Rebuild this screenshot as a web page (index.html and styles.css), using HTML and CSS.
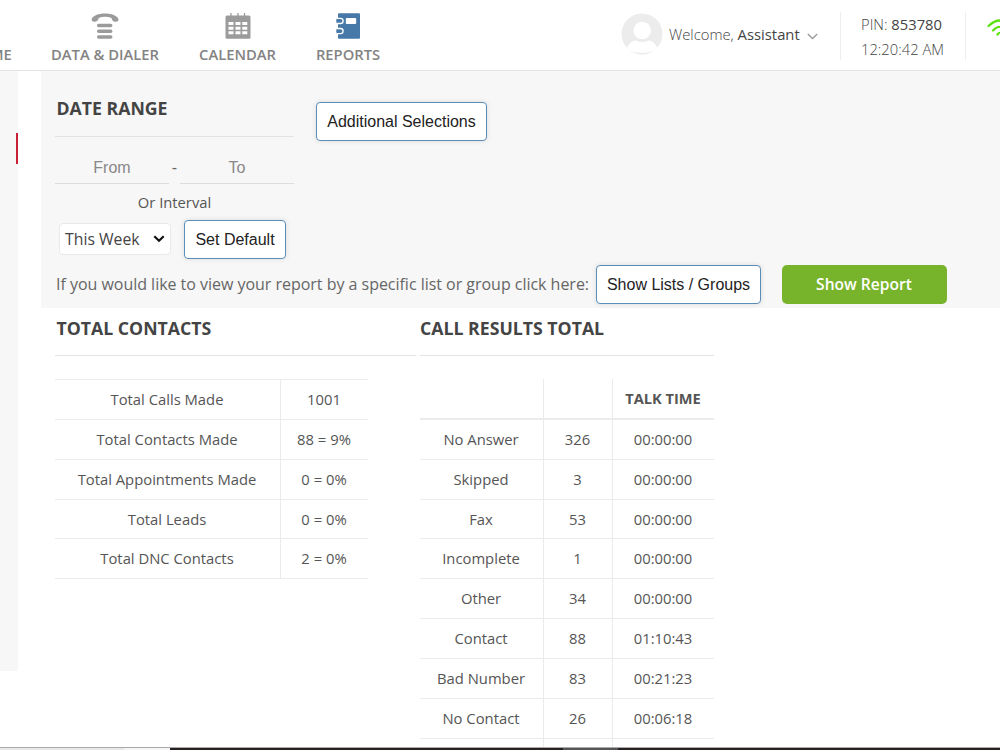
FILE: index.html
```html
<!DOCTYPE html>
<html lang="en">
<head>
<meta charset="utf-8">
<title>Reports</title>
<link rel="stylesheet" href="styles.css">
</head>
<body>
<div class="page">
  <header class="header">
    <nav class="nav">
      <a class="nav-item home">
        <svg width="28" height="28" viewBox="0 0 28 28"><path d="M2 15L14 4L27 14.500M6 15V26H22V15" fill="none" stroke="#9b9b9b" stroke-width="2.500"/></svg>
        <span>HOME</span>
      </a>
      <a class="nav-item dialer">
        <svg width="28" height="28" viewBox="0 0 28 28"><path d="M.7 7.500C1 3.600 8 1.500 14 1.500S27 3.600 27.500 7.500C27.700 9.500 25 10.500 22.500 9.200C20.800 8.300 21 7 20.500 5.900C16.500 4.400 11.500 4.400 7.700 5.900C7.200 7 7.400 8.300 5.500 9.200C3 10.500.5 9.500.7 7.500Z" fill="#9b9b9b"/><path d="M7.700 13.500H19.700M7.700 19.300H19.700M7.700 25H19.700" stroke="#9b9b9b" stroke-width="3.500" stroke-linecap="round"/></svg>
        <span>DATA &amp; DIALER</span>
      </a>
      <a class="nav-item calendar">
        <svg width="28" height="28" viewBox="0 0 28 28"><path d="M7 1V5M14 1V5M20.500 1V5" stroke="#9b9b9b" stroke-width="1.300"/><rect x="1.500" y="3.500" width="25" height="23.200" rx="1.500" fill="#9b9b9b"/><path d="M4.500 10h5v3h-5zM11.500 10h5v3h-5zM18.300 10h5v3h-5zM4.500 14.700h5v3h-5zM11.500 14.700h5v3h-5zM18.300 14.700h5v3h-5zM4.500 19.300h5v3h-5zM11.500 19.300h5v3h-5zM18.300 19.300h5v3h-5z" fill="#fff"/></svg>
        <span>CALENDAR</span>
      </a>
      <a class="nav-item reports">
        <svg width="28" height="28" viewBox="0 0 28 28"><rect x="4" y="1.300" width="22" height="25.500" rx="1" fill="#4679a8"/><rect x="11.800" y="6" width="10.400" height="6" rx="1" fill="#fff"/><path d="M2.500 6.300H6.500A2.600 2.600 0 0 1 6.500 11.500H2.500M2.500 16.500H6.500A2.600 2.600 0 0 1 6.500 21.700H2.500" fill="#4679a8" stroke="#fff" stroke-width="1.300"/><path d="M2.500 8.900H6.500M2.500 19.100H6.500" stroke="#4679a8" stroke-width="1.700"/></svg>
        <span>REPORTS</span>
      </a>
    </nav>
    <div class="user">
      <svg width="42" height="42" viewBox="0 0 42 42"><defs><clipPath id="avatar"><circle cx="21" cy="21" r="20.500"/></clipPath></defs><circle cx="21" cy="21" r="20.500" fill="#ececec"/><g clip-path="url(#avatar)" fill="#fff"><circle cx="21.200" cy="17.500" r="8.700"/><path d="M5 36C8 30 12 27.500 15 27.500C19 29.500 23.500 29.500 27.500 27.500C31 28 35 31 37 36C31 41 11 41 5 36Z"/></g></svg>
      <span class="welcome">Welcome, <b>Assistant</b></span>
      <svg class="chevron" width="11" height="7" viewBox="0 0 11 7"><path d="M.8 1L5.500 5.500L10.200 1" fill="none" stroke="#999" stroke-width="1.300"/></svg>
    </div>
    <div class="session">
      <div>PIN: <b>853780</b></div>
      <div>12:20:42 AM</div>
    </div>
    <svg class="wifi" width="34" height="30" viewBox="0 0 34 30"><g fill="none" stroke="#5be010" stroke-width="2.200" stroke-linecap="round"><path d="M1.500 13Q13 2 24.500 13"/><path d="M6 17.500Q13 10 20 17.500"/><path d="M10.500 21.500Q13 18 16 21.500"/></g></svg>
  </header>
  <div class="body">
    <aside class="sidebar"><div class="marker"></div></aside>
    <main class="main">
      <section class="filters">
        <div class="filter-top">
          <div class="range">
            <h2>DATE RANGE</h2>
            <div class="dates"><span class="date">From</span><span>-</span><span class="date">To</span></div>
            <div class="interval">Or Interval</div>
            <div class="interval-row">
              <div class="select"><span>This Week</span><svg width="12" height="8" viewBox="0 0 12 8"><path d="M1.300 1.300L6 5.800L10.700 1.300" fill="none" stroke="#111" stroke-width="2.200"/></svg></div>
              <button class="btn default">Set Default</button>
            </div>
          </div>
          <button class="btn additional">Additional Selections</button>
        </div>
        <div class="list-row">
          <span class="hint">If you would like to view your report by a specific list or group click here:</span>
          <button class="btn lists">Show Lists / Groups</button>
          <button class="report">Show Report</button>
        </div>
      </section>
      <section class="results">
        <div class="contacts">
          <h2>TOTAL CONTACTS</h2>
          <div class="table totals">
            <div class="row"><span>Total Calls Made</span><span>1001</span></div>
            <div class="row"><span>Total Contacts Made</span><span>88 = 9%</span></div>
            <div class="row"><span>Total Appointments Made</span><span>0 = 0%</span></div>
            <div class="row"><span>Total Leads</span><span>0 = 0%</span></div>
            <div class="row"><span>Total DNC Contacts</span><span>2 = 0%</span></div>
          </div>
        </div>
        <div class="calls">
          <h2>CALL RESULTS TOTAL</h2>
          <div class="table breakdown">
            <div class="row head"><span></span><span></span><span>TALK TIME</span></div>
            <div class="row"><span>No Answer</span><span>326</span><span>00:00:00</span></div>
            <div class="row"><span>Skipped</span><span>3</span><span>00:00:00</span></div>
            <div class="row"><span>Fax</span><span>53</span><span>00:00:00</span></div>
            <div class="row"><span>Incomplete</span><span>1</span><span>00:00:00</span></div>
            <div class="row"><span>Other</span><span>34</span><span>00:00:00</span></div>
            <div class="row"><span>Contact</span><span>88</span><span>01:10:43</span></div>
            <div class="row"><span>Bad Number</span><span>83</span><span>00:21:23</span></div>
            <div class="row"><span>No Contact</span><span>26</span><span>00:06:18</span></div>
            <div class="row"><span></span><span></span><span></span></div>
          </div>
        </div>
      </section>
    </main>
  </div>
  <div class="taskbar"><i class="t1"></i><i class="t2"></i><i class="t3"></i><i class="t4"></i></div>
</div>
</body>
</html>
```
FILE: styles.css
```css
* { box-sizing: border-box; }
body { margin: 0; background: #fff; color: #555; font-family: "Open Sans", sans-serif; }
.page { position: relative; width: 1000px; height: 750px; overflow: hidden; }
.header { display: flex; height: 71px; border-bottom: 1px solid #e4e4e4; }
svg { display: block; flex: none; }
.nav { display: flex; gap: 40px; width: 620px; flex: none; }
.nav-item { display: flex; flex-direction: column; align-items: center; padding-top: 12px; flex: none; white-space: nowrap; font-size: 14.750px; font-weight: 600; line-height: 20px; color: #838383; }
.nav-item span { margin-top: 4px; }
.home { width: 43px; margin-left: -32px; }
.home svg { margin-left: -7px; }
.dialer { width: 108px; }
.calendar { width: 77px; }
.reports { width: 64px; }
.user { display: flex; align-items: flex-start; width: 220px; flex: none; padding: 13px 0 0 1px; }
.welcome { width: 132px; margin: 11px 0 0 6px; font-size: 14.800px; font-weight: 300; line-height: 20px; white-space: nowrap; color: #444; }
.welcome b, .session b { font-weight: 400; color: #444; }
.chevron { margin: 20px 0 0 6px; }
.session { width: 126px; height: 48px; flex: none; margin-top: 12px; padding-left: 20px; border: solid #eee; border-width: 0 1px; font-size: 14.750px; font-weight: 300; line-height: 25px; white-space: nowrap; color: #444; }
.wifi { margin: 13px 0 0 21px; }
.body { display: flex; height: 679px; }
.sidebar { width: 18px; height: 600px; flex: none; padding: 62px 0 0 16px; background: #f7f7f7; }
.marker { width: 2px; height: 31px; background: #c92035; }
.main { width: 959px; flex: none; margin-left: 23px; }
.filters { height: 237px; padding-left: 14px; background: #f7f7f7; }
h2 { margin: 0; padding-left: 1.500px; font-size: 17.700px; font-weight: 700; line-height: 25px; color: #444; white-space: nowrap; }
.filter-top { display: flex; height: 192px; padding-top: 25px; }
.range { width: 239px; }
.range h2 { height: 41px; border-bottom: 1px solid #e3e3e3; }
.dates { display: flex; justify-content: space-between; height: 47px; font: 16px/32px "Liberation Sans", sans-serif; padding-top: 15px; color: #666; }
.date { width: 114px; height: 32px; border-bottom: 1px solid #ddd; text-align: center; color: #888; }
.interval { margin-top: 8px; padding-bottom: 1px; font-size: 14.750px; line-height: 20px; text-align: center; }
.interval-row { display: flex; padding: 7px 0 0 4px; }
.select { display: flex; align-items: center; justify-content: space-between; width: 112px; height: 32px; margin-top: 3px; padding: 0 5px; border: 1px solid #e9e9e9; border-radius: 4px; background: #fff; font-size: 15.800px; color: #444; white-space: nowrap; }
.btn { flex: none; height: 39px; padding: 0; border: 1px solid #5b8db8; border-radius: 4px; background: #fff; box-shadow: 0 0 5px #dadada; color: #222; font: 16px "Liberation Sans", sans-serif; white-space: nowrap; }
.default { width: 102px; margin-left: 13px; }
.additional { width: 171px; margin: 6px 0 0 22px; }
.list-row { display: flex; padding-top: 2px; }
.hint { width: 541px; padding-left: 1px; font-size: 16px; line-height: 38px; letter-spacing: -.025px; white-space: nowrap; color: #666; }
.lists { width: 165px; }
.report { width: 165px; height: 39px; margin-left: 21px; padding: 0 1px 1px 0; border: 0; border-radius: 5px; background: #78b42b; color: #fff; font: 600 15.600px "Open Sans", sans-serif; }
.results { display: flex; gap: 4px; padding: 8px 0 0 14px; }
.results h2 { height: 40px; border-bottom: 1px solid #e3e3e3; }
.contacts { width: 361px; }
.calls { width: 294px; }
.calls h2 { padding-left: 0; }
.table { margin-top: 23px; font-size: 14.800px; }
.row { display: grid; height: 39.870px; border-bottom: 1px solid #ebebeb; line-height: 38.500px; text-align: center; white-space: nowrap; }
.row span + span { border-left: 1px solid #ebebeb; }
.totals { width: 313px; border-top: 1px solid #ebebeb; }
.totals .row { grid-template-columns: 225px 88px; }
.totals .row span { padding-right: 1px; }
.breakdown .row { grid-template-columns: 123px 69px 102px; }
.breakdown .row span { padding-right: 1px; }
.breakdown .head { height: 40.800px; border-bottom-width: 2px; font-weight: 700; font-size: 14.600px; line-height: 38px; }
.taskbar { position: absolute; left: 0; bottom: 0; display: flex; width: 1000px; height: 3px; border-top: 1px solid #aaa; background: #272120; }
.t1 { width: 124px; background: #e8e8e8; }
.t2 { width: 46px; background: #f5f5f5; }
.t3 { width: 393px; }
.t4 { width: 55px; background: #555; }
```
